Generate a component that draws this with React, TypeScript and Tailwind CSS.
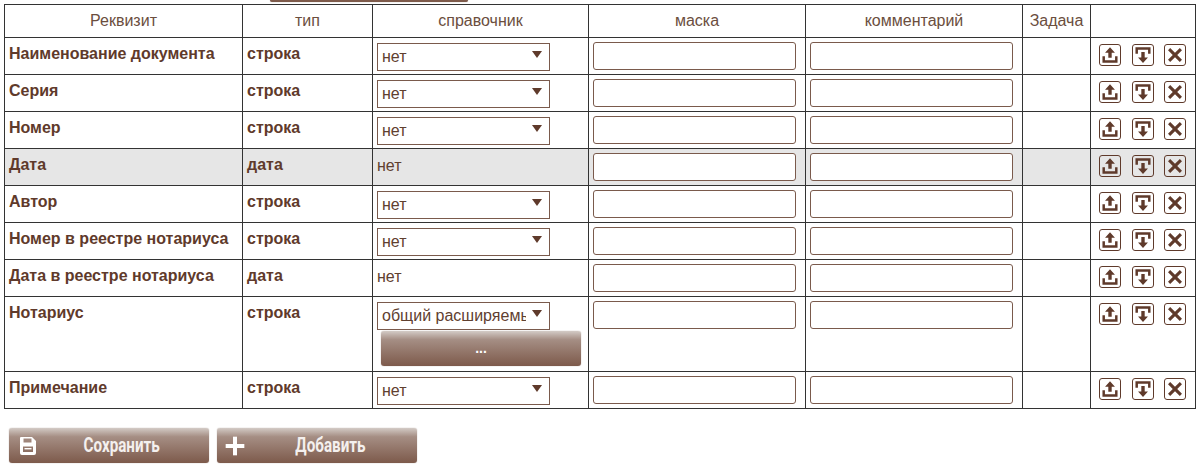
import { Plus } from 'lucide-react';

const rows = [
  { name: 'Наименование документа', type: 'строка', ref: 'нет' },
  { name: 'Серия', type: 'строка', ref: 'нет' },
  { name: 'Номер', type: 'строка', ref: 'нет' },
  { name: 'Дата', type: 'дата', ref: null, active: true },
  { name: 'Автор', type: 'строка', ref: 'нет' },
  { name: 'Номер в реестре нотариуса', type: 'строка', ref: 'нет' },
  { name: 'Дата в реестре нотариуса', type: 'дата', ref: null },
  { name: 'Нотариус', type: 'строка', ref: 'общий расширяемый', extra: true },
  { name: 'Примечание', type: 'строка', ref: 'нет' },
];

const headers = ['Реквизит', 'тип', 'справочник', 'маска', 'комментарий', 'Задача', ''];

function IconBox({ children }: { children: React.ReactNode }) {
  return (
    <button className="w-[22px] h-[22px] rounded-[3px] border-[1.5px] border-[#5f3a2b] bg-transparent flex items-center justify-center">
      <svg viewBox="0 0 16 16" className="w-[18px] h-[18px] text-[#5f3a2b]" fill="currentColor">
        {children}
      </svg>
    </button>
  );
}

function RefSelect({ value }: { value: string }) {
  return (
    <div className="relative w-[173px] h-[28px]">
      <select className="appearance-none w-full h-full border border-[#7a5a4c] bg-white pl-1 pr-[23px] text-[16px] text-[#5f4030] rounded-none outline-none">
        <option>{value}</option>
      </select>
      <span className="absolute left-[155px] top-[8px] w-0 h-0 border-l-[5px] border-r-[5px] border-t-[7px] border-l-transparent border-r-transparent border-t-[#5f3a2b]" />
    </div>
  );
}

function BrownButton({ className, children }: { className: string; children: React.ReactNode }) {
  return (
    <button className={`relative flex items-center justify-center rounded-[3px] bg-gradient-to-b from-[#d3cbc6] via-[#a58e84] via-[25%] to-[#7d5a4b] shadow-[0_0_1px_rgba(90,60,45,0.6)] text-white ${className}`}>
      {children}
    </button>
  );
}

function TextInput() {
  return <input className="block w-[203px] h-[28px] rounded-[3px] border border-[#7a5a4c] bg-white outline-none" />;
}

export default function App() {
  return (
    <div className="w-[1201px] h-[468px] overflow-hidden bg-white text-[#5f3a2b] font-['Liberation_Sans',Arial,sans-serif]">
      <div className="h-[4px] pl-[270px]">
        <div className="w-[198px] h-[2px] rounded-b-[3px] bg-[#7d5a4b] shadow-[0_0_1px_rgba(90,60,45,0.6)]" />
      </div>

      <table className="ml-[4px] w-[1191px] table-fixed border-collapse">
        <colgroup>
          <col className="w-[238px]" />
          <col className="w-[130px]" />
          <col className="w-[216px]" />
          <col className="w-[217px]" />
          <col className="w-[217px]" />
          <col className="w-[68px]" />
          <col className="w-[105px]" />
        </colgroup>
        <thead>
          <tr className="h-[33px]">
            {headers.map((h, i) => (
              <th key={i} className="border-[1.5px] border-[#333] text-center align-middle text-[16px] font-normal text-[#6b4e3e]">
                {h}
              </th>
            ))}
          </tr>
        </thead>
        <tbody>
          {rows.map((r) => (
            <tr key={r.name} className={`${r.extra ? 'h-[75px]' : 'h-[37px]'} ${r.active ? 'bg-[#e6e6e6]' : ''}`}>
              <td className="border-[1.5px] border-[#333] align-top pl-[4px] pt-[7px] text-[16px] leading-[18px] font-bold whitespace-nowrap">
                {r.name}
              </td>
              <td className="border-[1.5px] border-[#333] align-top pl-[4px] pt-[7px] text-[16px] leading-[18px] font-bold">
                {r.type}
              </td>
              <td className="border-[1.5px] border-[#333] align-top pl-[4px] pt-[5px]">
                {r.ref ? (
                  <RefSelect value={r.ref} />
                ) : (
                  <div className="pt-[3px] text-[16px] leading-[18px] text-[#5f4030]">нет</div>
                )}
                {r.extra && (
                  <BrownButton className="ml-[4px] mt-[1px] w-[200px] h-[35px] text-[14px] font-bold">...</BrownButton>
                )}
              </td>
              <td className="border-[1.5px] border-[#333] align-top pl-[4px] pt-[4px]">
                <TextInput />
              </td>
              <td className="border-[1.5px] border-[#333] align-top pl-[4px] pt-[4px]">
                <TextInput />
              </td>
              <td className="border-[1.5px] border-[#333]" />
              <td className="border-[1.5px] border-[#333] align-top pl-[8px] pt-[6px]">
                <div className="flex gap-[10.5px]">
                  <IconBox>
                    <path d="M8 1 12.4 6H9.5v4.4h-3V6H3.6z" />
                    <path d="M1.3 9.2h2.2v3.4h9V9.2h2.2v5.6H1.3z" />
                  </IconBox>
                  <IconBox>
                    <path d="M1.3 1.2h13.4v5.6h-2.2V3.4h-9v3.4H1.3z" />
                    <path d="M6.5 5.4h3v4.8h2.9L8 15l-4.4-4.8h2.9z" />
                  </IconBox>
                  <IconBox>
                    <path d="M3.7 1.8 8 6l4.3-4.2 1.9 1.9L10 8l4.2 4.3-1.9 1.9L8 10l-4.3 4.2-1.9-1.9L6 8 1.8 3.7z" />
                  </IconBox>
                </div>
              </td>
            </tr>
          ))}
        </tbody>
      </table>

      <div className="flex gap-[8px] pl-[9px] pt-[19px]">
        <BrownButton className="w-[200px] h-[35px] pl-[26px]">
          <svg viewBox="0 0 20 20" className="absolute left-[9px] top-[8px] w-[20px] h-[20px]" fill="white">
            <path d="M3 1h11l4 4v12a2 2 0 0 1-2 2H4a2 2 0 0 1-2-2V2a1 1 0 0 1 1-1zm2.5 1.5v4h8v-4zM5 10.5v5.5h10v-5.5z" fillRule="evenodd" />
            <rect x="6.5" y="12" width="7" height="1.4" />
          </svg>
          <span className="font-['Roboto',sans-serif] text-[21px] font-bold scale-x-[.725] text-[#f4f0ee]">Сохранить</span>
        </BrownButton>
        <BrownButton className="w-[200px] h-[35px] pl-[26px]">
          <Plus className="absolute left-[2px] top-[2px] w-[32px] h-[32px]" strokeWidth={3} strokeLinecap="butt" />
          <span className="font-['Roboto',sans-serif] text-[21px] font-bold scale-x-[.725] text-[#f4f0ee]">Добавить</span>
        </BrownButton>
      </div>
    </div>
  );
}
